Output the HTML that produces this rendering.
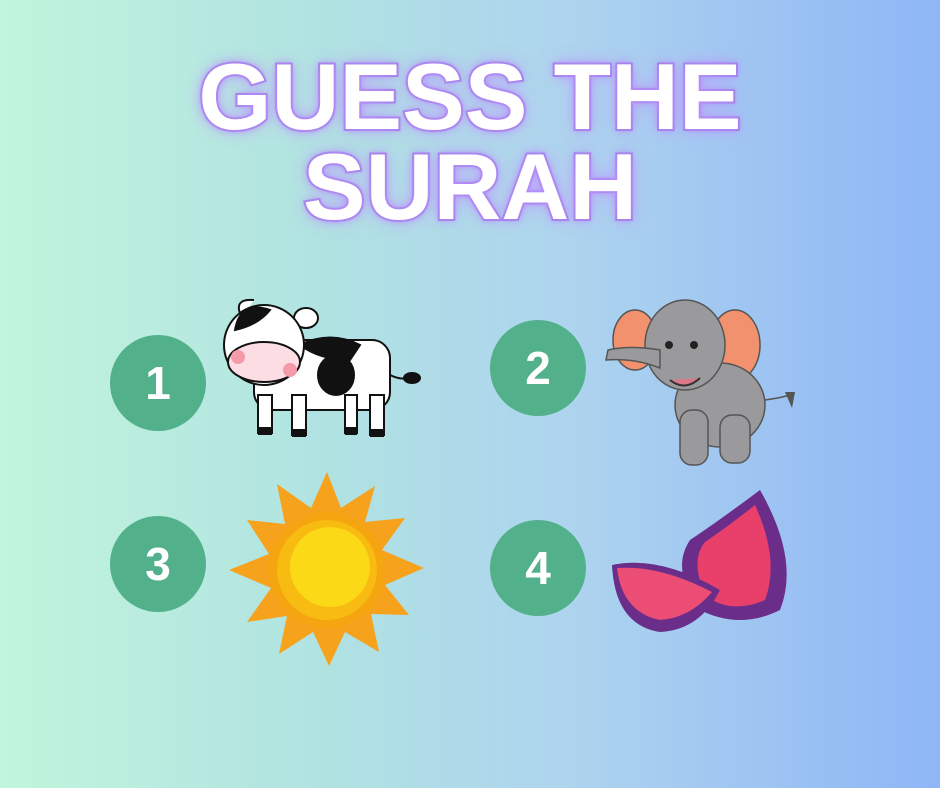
<!DOCTYPE html><html><head><style>
body{margin:0;width:940px;height:788px;overflow:hidden;background:linear-gradient(90deg,#c2f5dc 0%,#b0e2e2 35%,#aed4ee 60%,#8fb6f6 100%);font-family:"Liberation Sans",sans-serif;position:relative}
.t{position:absolute;left:0;width:940px;text-align:center;color:#fff;font-weight:bold;font-size:94px;letter-spacing:0px;line-height:1;-webkit-text-stroke:4px #a27be8;paint-order:stroke fill;text-shadow:0 0 8px #b08cf5,0 0 18px #c0a0ff,0 0 3px #9a70e0}
.c{position:absolute;width:96px;height:96px;border-radius:50%;background:#52b08a;color:#fff;font-size:46px;font-weight:bold;text-align:center;line-height:96px}
</style></head><body>
<div class="t" style="top:50px">GUESS THE</div>
<div class="t" style="top:140px">SURAH</div>
<div class="c" style="left:110px;top:335px">1</div>
<div class="c" style="left:490px;top:320px">2</div>
<div class="c" style="left:110px;top:516px">3</div>
<div class="c" style="left:490px;top:520px">4</div>
<svg width="940" height="788" style="position:absolute;left:0;top:0">
<g stroke="#111" stroke-width="2">
<rect x="254" y="340" width="136" height="70" rx="18" fill="#fff"/>
<rect x="258" y="395" width="14" height="38" fill="#fff"/><rect x="292" y="395" width="14" height="40" fill="#fff"/>
<rect x="345" y="395" width="12" height="38" fill="#fff"/><rect x="370" y="395" width="14" height="40" fill="#fff"/>
<path d="M390 375 Q400 380 408 378" fill="none"/><ellipse cx="412" cy="378" rx="8" ry="5" fill="#111"/>
<ellipse cx="336" cy="375" rx="18" ry="20" fill="#111"/><path d="M300 345 Q330 330 360 345 L350 360 Q320 360 300 345Z" fill="#111"/>
<path d="M242 318 Q232 298 254 300" fill="#fff"/><ellipse cx="306" cy="318" rx="12" ry="10" fill="#fff"/>
<ellipse cx="264" cy="345" rx="40" ry="40" fill="#fff"/>
<path d="M235 330 Q240 300 270 310 Q258 325 235 330Z" fill="#111"/>
<ellipse cx="264" cy="362" rx="36" ry="20" fill="#fbdde3"/>
</g>
<circle cx="238" cy="357" r="7" fill="#f59aa8"/><circle cx="290" cy="370" r="7" fill="#f59aa8"/>
<rect x="258" y="427" width="14" height="8" fill="#111"/><rect x="292" y="429" width="14" height="8" fill="#111"/><rect x="345" y="427" width="12" height="8" fill="#111"/><rect x="370" y="429" width="14" height="8" fill="#111"/>
<g stroke="#555" stroke-width="1.5">
<ellipse cx="635" cy="340" rx="22" ry="30" fill="#f2916e"/><ellipse cx="735" cy="345" rx="25" ry="35" fill="#f2916e"/>
<ellipse cx="720" cy="405" rx="45" ry="42" fill="#9a9a9c"/>
<rect x="680" y="410" width="28" height="55" rx="12" fill="#9a9a9c"/><rect x="720" y="415" width="30" height="48" rx="12" fill="#9a9a9c"/>
<path d="M765 400 Q780 398 790 395" fill="none"/>
<ellipse cx="685" cy="345" rx="40" ry="45" fill="#9a9a9c"/>
<path d="M660 350 Q630 345 608 350 L606 360 Q635 358 660 368Z" fill="#9a9a9c"/>
</g>
<circle cx="669" cy="345" r="4" fill="#222"/><circle cx="694" cy="345" r="4" fill="#222"/>
<path d="M670 380 Q685 392 700 378" stroke="#333" stroke-width="2" fill="#d9788a"/>
<path d="M785 392 L795 392 L792 408Z" fill="#555"/>
<g transform="translate(327,570)">
<polygon fill="#f6a21c" points="0,-98 14,-62 48,-84 38,-48 78,-52 55,-20 97,-2 58,15 82,45 44,44 52,82 18,62 2,96 -14,62 -48,84 -40,46 -80,52 -56,18 -98,0 -58,-16 -80,-50 -42,-46 -50,-86 -16,-62"/>
<circle r="58" fill="#f4a50f"/><circle r="50" fill="#f8bb12"/><circle cx="3" cy="-3" r="40" fill="#fcd916"/>
</g>
<path d="M760 490 Q800 560 780 610 Q740 630 700 610 Q670 570 690 540 Q720 520 760 490Z" fill="#6a2e8a"/>
<path d="M755 505 Q780 560 765 600 Q730 615 705 595 Q690 560 705 542 Q730 525 755 505Z" fill="#e9406b"/>
<path d="M612 565 Q660 555 720 590 Q700 630 660 632 Q615 625 612 565Z" fill="#6a2e8a"/>
<path d="M617 568 Q660 565 712 592 Q690 618 660 620 Q622 612 617 568Z" fill="#ec4d74"/>
</svg>
</body></html>
